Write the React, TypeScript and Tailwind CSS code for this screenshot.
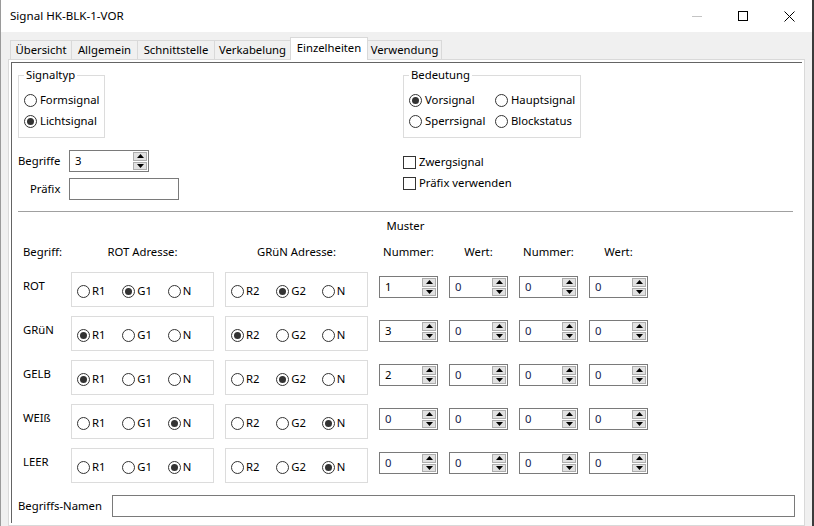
import React from 'react';

type RadioProps = { checked?: boolean; label: string; gap?: string };

function Radio({ checked, label, gap = 'gap-[3px]' }: RadioProps) {
  return (
    <span className={`flex items-center ${gap}`}>
      <span className="flex h-[13px] w-[13px] shrink-0 items-center justify-center rounded-full border border-[#333333] bg-white">
        {checked && <span className="h-[7px] w-[7px] rounded-full bg-[#333333]" />}
      </span>
      <span>{label}</span>
    </span>
  );
}

function Check({ label }: { label: string }) {
  return (
    <span className="flex h-[21px] items-center gap-[3px]">
      <span className="h-[13px] w-[13px] border border-[#333333] bg-white" />
      <span>{label}</span>
    </span>
  );
}

function Arrow({ up }: { up?: boolean }) {
  return (
    <svg width="7" height="4" viewBox="0 0 7 4">
      <path d={up ? 'M0 4 L3.5 0 L7 4 Z' : 'M0 0 L3.5 4 L7 0 Z'} fill="#000" />
    </svg>
  );
}

// Windows style numeric up/down
function Spinner({ value, width, muted }: { value: string; width: string; muted?: boolean }) {
  return (
    <div className={`flex h-[22px] border border-[#7a7a7a] bg-white ${width}`}>
      <span className={`flex-1 pl-[5px] leading-[20px] ${muted ? 'text-[#141c4e]' : ''}`}>{value}</span>
      <div className="flex w-[16px] flex-col gap-px p-px">
        <span className="flex flex-1 items-center justify-center border border-[#adadad] bg-[#e1e1e1]">
          <Arrow up />
        </span>
        <span className="flex flex-1 items-center justify-center border border-[#adadad] bg-[#e1e1e1]">
          <Arrow />
        </span>
      </div>
    </div>
  );
}

const tabs = [
  { label: 'Übersicht', w: 'w-[61px] border-l' },
  { label: 'Allgemein', w: 'w-[66px] border-l' },
  { label: 'Schnittstelle', w: 'w-[77px] border-l' },
  { label: 'Verkabelung', w: 'w-[76px] border-l' },
  { label: 'Einzelheiten', w: 'w-[78px] border-x', active: true },
  { label: 'Verwendung', w: 'w-[74px] border-r' },
];

const rows = [
  { name: 'ROT', rot: 1, gruen: 1, nr: '1' },
  { name: 'GRüN', rot: 0, gruen: 0, nr: '3' },
  { name: 'GELB', rot: 0, gruen: 1, nr: '2' },
  { name: 'WEIß', rot: 2, gruen: 2, nr: '0' },
  { name: 'LEER', rot: 2, gruen: 2, nr: '0' },
];

const grid = 'grid grid-cols-[42px_143px_143px_59px_59px_59px_59px] gap-x-[11px]';

function AddressBox({ prefix, num, sel }: { prefix: string[]; num: string; sel: number }) {
  const opts = [prefix[0] + num, prefix[1] + num, 'N'];
  return (
    <div className="flex h-[35px] items-center border border-[#dcdcdc] pl-[5px] pt-[3px]">
      {opts.map((o, i) => (
        <span key={o} className="w-[46px]">
          <Radio checked={sel === i} label={o} gap="gap-[2px]" />
        </span>
      ))}
    </div>
  );
}

export default function App() {
  return (
    <div className="flex h-[526px] w-[814px] overflow-hidden bg-[#3b3b3b] font-['Noto_Sans',sans-serif] text-[11.3px] text-black">
      <div className="flex w-[812px] flex-col border-l border-[#9a9a9a] bg-[#f0f0f0]">
        {/* Title bar */}
        <div className="flex h-[32px] shrink-0 items-center justify-between bg-white">
          <span className="pl-[9px] text-[11.6px]">Signal HK-BLK-1-VOR</span>
          <div className="flex h-full">
            <span className="flex w-[46px] items-center justify-center">
              <svg width="10" height="10" viewBox="0 0 10 10">
                <path d="M0 5.5 H10" stroke="#c4c4c4" strokeWidth="1" />
              </svg>
            </span>
            <span className="flex w-[46px] items-center justify-center">
              <svg width="10" height="10" viewBox="0 0 10 10">
                <rect x="0.5" y="0.5" width="9" height="9" fill="none" stroke="#000" strokeWidth="1" />
              </svg>
            </span>
            <span className="flex w-[46px] items-center justify-center">
              <svg width="11" height="11" viewBox="0 0 11 11">
                <path d="M0.5 0.5 L10.5 10.5 M10.5 0.5 L0.5 10.5" stroke="#000" strokeWidth="1" />
              </svg>
            </span>
          </div>
        </div>

        {/* Tabs + page */}
        <div className="flex flex-1 flex-col pl-[7px] pt-[5px]">
          <div className="relative z-10 -mb-px flex items-end pl-[2px]">
            {tabs.map((t) =>
              t.active ? (
                <span
                  key={t.label}
                  className={`flex h-[23px] items-center justify-center border-t border-[#d9d9d9] bg-white pb-[2px] ${t.w}`}
                >
                  {t.label}
                </span>
              ) : (
                <span
                  key={t.label}
                  className={`mb-px flex h-[19px] items-center justify-center border-t border-[#d9d9d9] bg-[#f0f0f0] ${t.w}`}
                >
                  {t.label}
                </span>
              )
            )}
          </div>

          <div className="flex w-[797px] flex-1 flex-col border border-[#d9d9d9] bg-white p-[2px]">
            <div className="flex flex-1 flex-col border-l border-t border-[#646464] pl-[6px]">
              {/* Upper part */}
              <div className="mt-[4px] flex">
                <div className="w-[385px]">
                  <fieldset className="w-[86px] border border-[#dcdcdc] px-[5px]">
                    <legend className="px-[2px] leading-[16px]">Signaltyp</legend>
                    <div className="pb-[5px] pt-[7px]">
                      <div className="flex h-[21px] items-center">
                        <Radio label="Formsignal" />
                      </div>
                      <div className="flex h-[21px] items-center">
                        <Radio checked label="Lichtsignal" />
                      </div>
                    </div>
                  </fieldset>

                  <div className="mt-[12px] flex items-center">
                    <span className="w-[51px]">Begriffe</span>
                    <Spinner value="3" width="w-[80px]" />
                  </div>
                  <div className="mt-[6px] flex items-center">
                    <span className="w-[51px] pl-[12px]">Präfix</span>
                    <div className="h-[22px] w-[110px] border border-[#7a7a7a] bg-white" />
                  </div>
                </div>

                <div>
                  <fieldset className="w-[178px] border border-[#dcdcdc] px-[5px]">
                    <legend className="px-[2px] leading-[16px]">Bedeutung</legend>
                    <div className="grid grid-cols-[86px_auto] pb-[5px] pt-[7px]">
                      <div className="flex h-[21px] items-center">
                        <Radio checked label="Vorsignal" />
                      </div>
                      <div className="flex h-[21px] items-center">
                        <Radio label="Hauptsignal" />
                      </div>
                      <div className="flex h-[21px] items-center">
                        <Radio label="Sperrsignal" />
                      </div>
                      <div className="flex h-[21px] items-center">
                        <Radio label="Blockstatus" />
                      </div>
                    </div>
                  </fieldset>
                  <div className="mt-[14px]">
                    <Check label="Zwergsignal" />
                    <Check label="Präfix verwenden" />
                  </div>
                </div>
              </div>

              {/* Separator */}
              <div className="mt-[11px] w-[775px] border-t border-[#a0a0a0]" />

              <div className="mt-[6px] w-[775px] text-center leading-[16px]">Muster</div>

              <div className={`mt-[10px] leading-[16px] ${grid}`}>
                <span className="pl-[5px]">Begriff:</span>
                <span className="text-center">ROT Adresse:</span>
                <span className="text-center">GRüN Adresse:</span>
                <span className="text-center">Nummer:</span>
                <span className="text-center">Wert:</span>
                <span className="text-center">Nummer:</span>
                <span className="text-center">Wert:</span>
              </div>

              <div className={`mt-[12px] gap-y-[9px] ${grid}`}>
                {rows.map((r) => (
                  <React.Fragment key={r.name}>
                    <span className="mt-[6px] pl-[5px] leading-[16px]">{r.name}</span>
                    <AddressBox prefix={['R', 'G']} num="1" sel={r.rot} />
                    <AddressBox prefix={['R', 'G']} num="2" sel={r.gruen} />
                    <div className="mt-[4px]">
                      <Spinner value={r.nr} width="w-[59px]" muted={r.nr === '0'} />
                    </div>
                    <div className="mt-[4px]">
                      <Spinner value="0" width="w-[59px]" muted />
                    </div>
                    <div className="mt-[4px]">
                      <Spinner value="0" width="w-[59px]" muted />
                    </div>
                    <div className="mt-[4px]">
                      <Spinner value="0" width="w-[59px]" muted />
                    </div>
                  </React.Fragment>
                ))}
              </div>

              <div className="mt-[12px] flex items-center">
                <span className="w-[94px]">Begriffs-Namen</span>
                <div className="h-[22px] w-[683px] border border-[#7a7a7a] bg-white" />
              </div>
            </div>
          </div>
        </div>
      </div>
    </div>
  );
}
